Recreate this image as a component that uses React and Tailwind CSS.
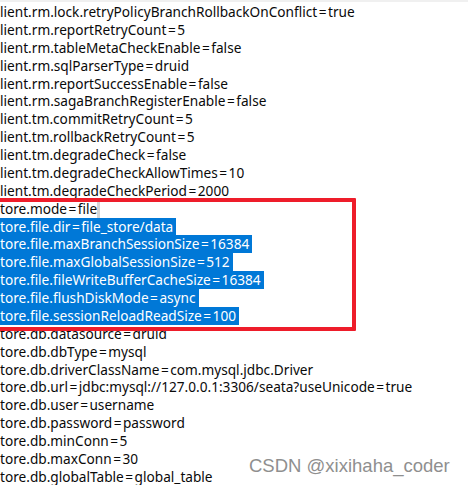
import React from "react";

const lines = [
  "lient.rm.lock.retryPolicyBranchRollbackOnConflict=true",
  "lient.rm.reportRetryCount=5",
  "lient.rm.tableMetaCheckEnable=false",
  "lient.rm.sqlParserType=druid",
  "lient.rm.reportSuccessEnable=false",
  "lient.rm.sagaBranchRegisterEnable=false",
  "lient.tm.commitRetryCount=5",
  "lient.tm.rollbackRetryCount=5",
  "lient.tm.degradeCheck=false",
  "lient.tm.degradeCheckAllowTimes=10",
  "lient.tm.degradeCheckPeriod=2000",
  "tore.mode=file",
  "tore.file.dir=file_store/data",
  "tore.file.maxBranchSessionSize=16384",
  "tore.file.maxGlobalSessionSize=512",
  "tore.file.fileWriteBufferCacheSize=16384",
  "tore.file.flushDiskMode=async",
  "tore.file.sessionReloadReadSize=100",
  "tore.db.datasource=druid",
  "tore.db.dbType=mysql",
  "tore.db.driverClassName=com.mysql.jdbc.Driver",
  "tore.db.url=jdbc:mysql://127.0.0.1:3306/seata?useUnicode=true",
  "tore.db.user=username",
  "tore.db.password=password",
  "tore.db.minConn=5",
  "tore.db.maxConn=30",
  "tore.db.globalTable=global_table",
];

function Line({ text }) {
  const parts = text.split("=");
  return (
    <>
      {parts.map((p, j) => (
        <React.Fragment key={j}>
          {j > 0 && <span className="mx-[1.5px]">=</span>}
          {p}
        </React.Fragment>
      ))}
    </>
  );
}

export default function App() {
  return (
    <div className="relative w-[468px] h-[485px] overflow-hidden bg-white">
      <div className="h-[2px] bg-[#f0f0f0]" />
      <div
        className="flex flex-col pt-[1px] text-[13.65px] leading-[17.88px] text-[#0a0a0a]"
        style={{ fontFamily: '"Noto Sans", "Open Sans", sans-serif' }}
      >
        {lines.map((l, i) => {
          const sel = i >= 12 && i <= 17;
          return (
            <div key={i} className="flex h-[17.88px] whitespace-pre">
              <span className={sel ? "bg-[#0078d7] text-white pr-[3px]" : ""}>
                <Line text={l} />
              </span>
              {i === 11 && <span className="w-[3px] bg-[#d4d4d4]" />}
            </div>
          );
        })}
      </div>
      <div className="absolute left-[-6px] top-[198px] w-[362px] h-[133px] border-4 border-[#ee1d2a] rounded-[1px]" />
      <div
        className="absolute left-[249px] top-[455px] text-[18.5px] leading-[22px] text-[#8f8f8f]"
        style={{ fontFamily: '"Liberation Sans", Arial, sans-serif' }}
      >
        CSDN @xixihaha_coder
      </div>
    </div>
  );
}
